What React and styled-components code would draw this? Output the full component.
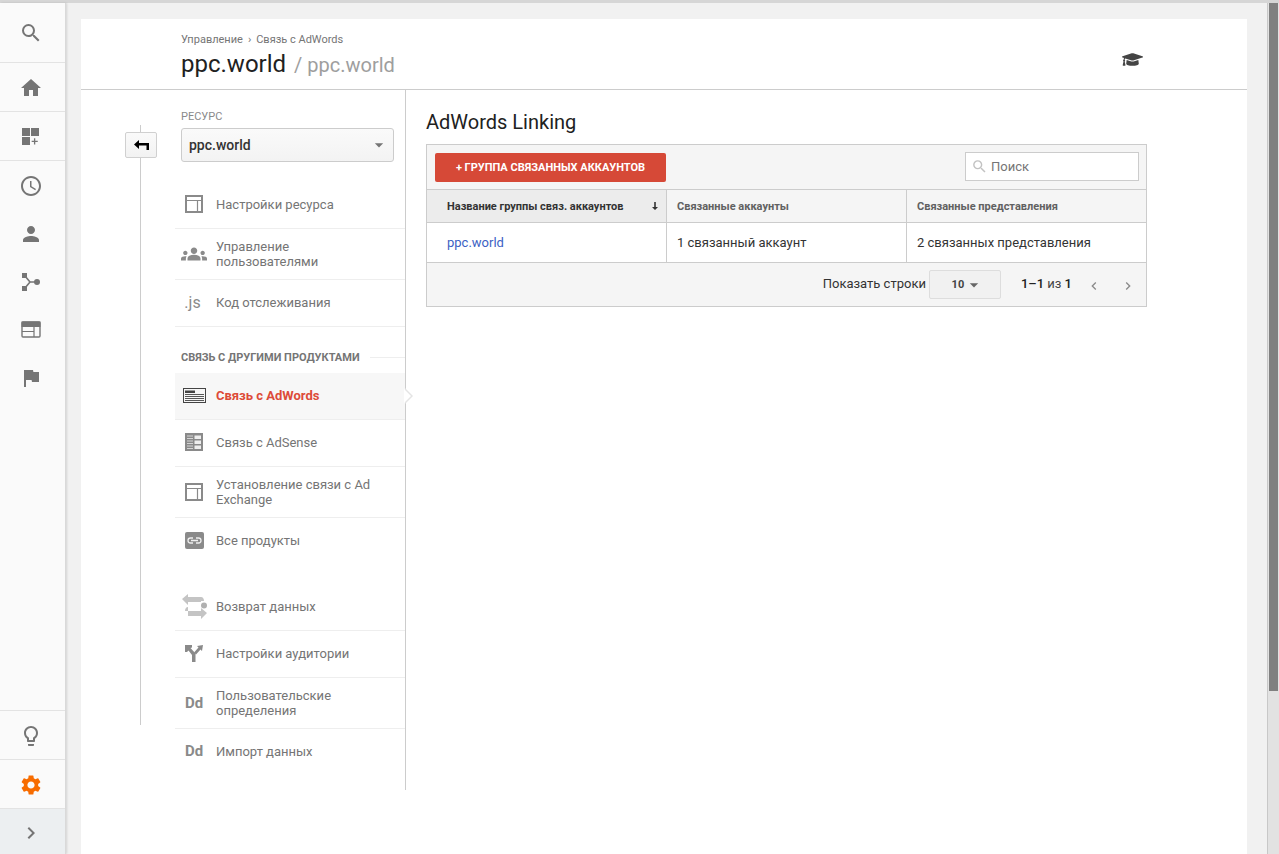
import React from 'react';
import styled, { createGlobalStyle } from 'styled-components';
import {
  MdSearch, MdHome, MdAccessTime, MdPerson, MdSettings, MdLightbulbOutline,
  MdChevronRight, MdChevronLeft, MdGroups, MdArrowDropDown, MdFlag,
} from 'react-icons/md';
import { FaGraduationCap } from 'react-icons/fa';

const GlobalStyle = createGlobalStyle`
  html, body { margin: 0; padding: 0; height: 100%; overflow: hidden; }
  body { font-family: Roboto, "Liberation Sans", sans-serif; background: #f1f1f1; }
  * { box-sizing: border-box; }
`;

// Small drawn icons ----------------------
const GridPlusIcon = () => (
  <svg width="20" height="20" viewBox="0 0 20 20" fill="#757575">
    <rect x="1" y="1" width="8" height="8" />
    <rect x="10" y="1" width="8" height="8" />
    <rect x="1" y="10" width="8" height="8" />
    <path d="M13 11.5h1.4V14H17v1.3h-2.6V18H13v-2.7h-2.4V14H13z" transform="translate(.6 .4) scale(.95)" />
  </svg>
);

const BranchIcon = () => (
  <svg width="20" height="20" viewBox="0 0 20 20" fill="#757575">
    <rect x="1" y="1" width="5" height="5" />
    <rect x="1" y="14" width="5" height="5" />
    <circle cx="16" cy="10" r="3" />
    <path d="M4 4l5 6-5 6M9 10h6" fill="none" stroke="#757575" strokeWidth="1.6" />
  </svg>
);

const WindowIcon = () => (
  <svg width="20" height="18" viewBox="0 0 20 18" fill="none" stroke="#757575">
    <rect x="1" y="1" width="18" height="15" rx="1" strokeWidth="1.4" />
    <rect x="1" y="1" width="18" height="4.5" fill="#757575" strokeWidth="1" />
    <path d="M1 10.5h12M13 5v11" strokeWidth="1.2" />
  </svg>
);

const PanelIcon = () => (
  <svg width="18" height="18" viewBox="0 0 18 18" fill="none" stroke="#8a8a8a">
    <rect x="1" y="1" width="16" height="16" strokeWidth="2" />
    <path d="M1 5.5h16M12.5 5.5V17" strokeWidth="1.2" />
  </svg>
);

const AdWordsIcon = () => (
  <svg width="23" height="15" viewBox="0 0 23 15" fill="none" stroke="#444">
    <rect x=".5" y=".5" width="22" height="14" strokeWidth="1" />
    <rect x="2" y="2.5" width="10" height="2.5" fill="#444" stroke="none" />
    <path d="M2 6.5h19M2 8.5h19M2 10.5h19M2 12.5h19" strokeWidth=".9" />
  </svg>
);

const AdSenseIcon = () => (
  <svg width="18" height="18" viewBox="0 0 18 18">
    <rect width="18" height="18" fill="#8a8a8a" />
    <path d="M2 3h6M2 5.5h6M2 8h6M2 10.5h6M2 13h6M2 15.5h6" stroke="#d5d5d5" strokeWidth="1" />
    <rect x="9.5" y="2.5" width="6.5" height="3.5" fill="#eee" />
    <rect x="9.5" y="7.5" width="6.5" height="3.5" fill="#eee" />
    <rect x="9.5" y="12.5" width="6.5" height="3.5" fill="#eee" />
  </svg>
);

const LinkIcon = () => (
  <svg width="19" height="17" viewBox="0 0 19 17">
    <rect width="19" height="17" rx="2" fill="#8a8a8a" />
    <path d="M8 6H5.5a2.5 2.5 0 0 0 0 5H8M11 6h2.500a2.500 2.500 0 0 1 0 5H11M6 8.500h7" fill="none" stroke="#eee" strokeWidth="1.300" />
  </svg>
);

const ReturnIcon = () => (
  <svg width="25" height="26" viewBox="0 0 25 26" fill="#c4c4c4">
    <path d="M0 6l6-5v3h13v5H6v3zM25 20l-6-5v3H6v5h13v3z" />
    <path d="M19 4c2 0 3 2 3 4h-3zM6 14c-2 0-3 2-3 4h3z" />
    <circle cx="22" cy="12.500" r="3" fill="#b0b0b0" />
  </svg>
);

const AudienceIcon = () => (
  <svg width="18" height="18" viewBox="0 0 18 18" fill="#8a8a8a">
    <path d="M0 1h7v2.500L5.500 4 10.500 9.500V18H7v-7L3.500 6.500 2 8H0z" />
    <path d="M18 1l-1 6-1.500-1.500-4.500 5-2-2 4.500-5L12 2z" />
  </svg>
);

const SortIcon = () => (
  <svg width="6" height="8" viewBox="0 0 6 8" fill="#333">
    <path d="M2.200 0h1.600v5H6L3 8 0 5h2.200z" />
  </svg>
);

const TableSearchIcon = styled(MdSearch)`
  color: #c2c2c2;
  flex: none;
`;

// Layout ----------------------
const Page = styled.div`
  display: flex;
  height: 854px;
  border-top: 3px solid #d6d6d6;
  background: #f1f1f1;
`;

const Sidebar = styled.nav`
  width: 66px;
  flex: none;
  display: flex;
  flex-direction: column;
  background: #fafafa;
  border-right: 1px solid #d9d9d9;
  box-shadow: 1px 0 2px rgba(0, 0, 0, .12);
`;

const SideGroup = styled.div`
  display: flex;
  flex-direction: column;
  margin-top: ${(p) => (p.$bottom ? 'auto' : '0')};
`;

const SideItem = styled.div`
  height: ${(p) => p.$h || 48}px;
  flex: none;
  display: flex;
  align-items: center;
  justify-content: center;
  padding: ${(p) => (p.$flat ? '0' : '2px')} 3px 0 0;
  color: ${(p) => p.$color || '#757575'};
  background: ${(p) => p.$bg || 'transparent'};
  border-top: ${(p) => (p.$top ? '1px solid #e3e3e3' : '0')};
  border-bottom: ${(p) => (p.$line ? '1px solid #e3e3e3' : '0')};
`;

const Main = styled.div`
  flex: 1;
  min-width: 0;
  padding: 16px 20px 0 15px;
`;

const Card = styled.div`
  background: #fff;
  height: 100%;
`;

const Header = styled.header`
  height: 71px;
  padding: 13px 104px 0 100px;
  display: flex;
  align-items: center;
  justify-content: space-between;
  border-bottom: 1px solid #ccc;
`;

const Breadcrumbs = styled.div`
  font-size: 11px;
  line-height: 14px;
  color: #757575;
  display: flex;
  gap: 5px;
  margin-top: -9px;
`;

const Titles = styled.div`
  display: flex;
  align-items: baseline;
  gap: 8px;
  margin-top: 2px;
  line-height: 30px;
`;

const Title = styled.span`
  font-size: 24px;
  color: #212121;
`;

const SubTitle = styled.span`
  font-size: 20px;
  color: #9e9e9e;
`;

const CapIcon = styled(FaGraduationCap)`
  margin-top: -2px;
  color: #444;
`;

const Columns = styled.div`
  display: flex;
  align-items: flex-start;
`;

const Rail = styled.div`
  width: 94px;
  padding: 35px 0 0 24px;
  flex: none;
  height: 635px;
  display: flex;
  flex-direction: column;
  align-items: flex-start;
`;

const RailLine = styled.div`
  width: 1px;
  margin-left: 15px;
  background: #ccc;
  height: ${(p) => (p.$long ? 'auto' : '7px')};
  flex: ${(p) => (p.$long ? '1' : 'none')};
`;

const RailGroup = styled.div`
  display: flex;
  flex-direction: column;
  align-items: flex-start;
  height: 100%;
  margin-left: 20px;
`;

const BackButton = styled.div`
  width: 32px;
  height: 26px;
  flex: none;
  display: flex;
  align-items: center;
  justify-content: center;
  background: linear-gradient(#fafafa, #f2f2f2);
  border: 1px solid #d0d0d0;
  border-radius: 2px;
`;

const NavColumn = styled.div`
  width: 231px;
  height: 700px;
  flex: none;
  border-right: 1px solid #ccc;
`;

const Property = styled.div`
  padding: 20px 11px 20px 6px;
`;

const FieldLabel = styled.div`
  font-size: 11px;
  line-height: 13px;
  color: #8a8a8a;
  margin-bottom: 5px;
`;

const PropertySelect = styled.div`
  height: 34px;
  display: flex;
  align-items: center;
  justify-content: space-between;
  padding: 0 4px 0 7px;
  font-size: 14px;
  font-weight: 500;
  color: #333;
  background: linear-gradient(#fafafa, #f3f3f3);
  border: 1px solid #ccc;
  border-radius: 3px;
`;

const NavItem = styled.div`
  height: ${(p) => p.$h || 47}px;
  padding-bottom: ${(p) => (p.$h ? 0 : 2)}px;
  display: flex;
  align-items: center;
  position: relative;
  font-size: 13px;
  line-height: 15px;
  font-weight: ${(p) => (p.$active ? 700 : 400)};
  color: ${(p) => (p.$active ? '#dd4b39' : '#757575')};
  background: ${(p) => (p.$active ? '#f7f7f7' : 'transparent')};
  border-bottom: ${(p) => (p.$plain ? '0' : '1px solid #eee')};
`;

const NavLabel = styled.span`
  max-width: 160px;
`;

const NavIcon = styled.span`
  width: 41px;
  flex: none;
  display: flex;
  align-items: center;
  justify-content: center;
  padding-right: 3px;
  color: #8a8a8a;
`;

const TextIcon = styled.span`
  font-size: ${(p) => p.$size || 14}px;
  font-weight: ${(p) => p.$weight || 700};
  margin-right: ${(p) => p.$shift || 0}px;
  color: #8a8a8a;
`;

const NavPointer = styled.span`
  position: absolute;
  right: -8px;
  top: 15px;
  width: 0;
  height: 0;
  border-top: 8px solid transparent;
  border-bottom: 8px solid transparent;
  border-left: 8px solid #e4e4e4;
  &::after {
    content: '';
    position: absolute;
    left: -9px;
    top: -7px;
    border-top: 7px solid transparent;
    border-bottom: 7px solid transparent;
    border-left: 7px solid #fff;
  }
`;

const SectionTitle = styled.div`
  display: flex;
  align-items: center;
  gap: 10px;
  height: 46px;
  padding: 14px 0 0 6px;
  font-size: 11px;
  font-weight: 700;
  color: #757575;
  white-space: nowrap;
  &::after {
    content: '';
    flex: 1;
    height: 1px;
    background: #eee;
  }
`;

const Gap = styled.div`
  height: 19px;
`;

const Content = styled.section`
  flex: 1;
  min-width: 0;
  padding: 20px 100px 0 20px;
`;

const PageTitle = styled.h1`
  margin: 0 0 10px;
  font-size: 20px;
  line-height: 24px;
  font-weight: 400;
  color: #212121;
`;

const TableBox = styled.div`
  border: 1px solid #ccc;
  background: #f5f5f5;
`;

const Toolbar = styled.div`
  height: 45px;
  padding: 8px 7px 0 8px;
  display: flex;
  justify-content: space-between;
  align-items: flex-start;
  border-bottom: 1px solid #ccc;
`;

const AddButton = styled.button`
  width: 231px;
  height: 29px;
  border: 0;
  border-radius: 2px;
  background: #d64937;
  color: #fff;
  font-family: inherit;
  font-size: 11px;
  font-weight: 700;
  padding: 0;
`;

const SearchBox = styled.div`
  width: 174px;
  height: 29px;
  margin-top: -1px;
  padding: 0 5px;
  display: flex;
  align-items: center;
  gap: 3px;
  background: #fff;
  border: 1px solid #ccc;
  font-size: 13px;
  color: #757575;
`;

const Row = styled.div`
  display: grid;
  grid-template-columns: 240px 240px 1fr;
  height: ${(p) => p.$h}px;
  background: ${(p) => (p.$head ? '#f5f5f5' : '#fff')};
  border-bottom: 1px solid #ccc;
`;

const Cell = styled.div`
  display: flex;
  align-items: center;
  justify-content: space-between;
  padding: 0 8px 0 ${(p) => (p.$first ? 20 : 10)}px;
  font-size: ${(p) => (p.$head ? 11 : 13)}px;
  font-weight: ${(p) => (p.$head ? 700 : 400)};
  color: ${(p) => (p.$sorted ? '#333' : p.$head ? '#616161' : '#333')};
  background: ${(p) => (p.$sorted ? '#ececec' : 'transparent')};
  border-right: ${(p) => (p.$last ? '0' : '1px solid #ccc')};
`;

const TableLink = styled.a`
  color: #3c5fc4;
  font-size: 13px;
  text-decoration: none;
`;

const Pager = styled.div`
  height: 43px;
  padding-bottom: 2px;
  display: flex;
  align-items: center;
  justify-content: flex-end;
  font-size: 13px;
  color: #333;
`;

const RowsSelect = styled.div`
  width: 72px;
  height: 29px;
  margin: 2px 20px 0 3px;
  display: flex;
  align-items: center;
  justify-content: center;
  font-size: 11px;
  font-weight: 700;
  color: #444;
  padding-left: 6px;
  background: #f1f1f1;
  border: 1px solid #ddd;
  border-radius: 2px;
`;

const PageCount = styled.span`
  b { font-weight: 500; color: #222; }
  color: #444;
  margin-right: 14px;
`;

const PagerIcons = styled.div`
  display: flex;
  gap: 18px;
  color: #8a8a8a;
  margin: 4px 10px 0 0;
`;

const Scrollbar = styled.div`
  width: 12px;
  flex: none;
  padding: 0 1px;
  background: #e2e2e2;
  border-left: 1px solid #c8c8c8;
`;

const ScrollThumb = styled.div`
  height: 688px;
  background: #808080;
`;

const navTop = [
  { icon: <PanelIcon />, label: 'Настройки ресурса' },
  { icon: <MdGroups size={26} />, label: 'Управление пользователями', h: 51 },
  { icon: <TextIcon $size={16} $weight={400} $shift={3}>.js</TextIcon>, label: 'Код отслеживания' },
];

const navLinks = [
  { icon: <AdWordsIcon />, label: 'Связь с AdWords', active: true },
  { icon: <AdSenseIcon />, label: 'Связь с AdSense' },
  { icon: <PanelIcon />, label: 'Установление связи с Ad Exchange', h: 51 },
  { icon: <LinkIcon />, label: 'Все продукты', plain: true },
];

const navData = [
  { icon: <ReturnIcon />, label: 'Возврат данных' },
  { icon: <AudienceIcon />, label: 'Настройки аудитории' },
  { icon: <TextIcon $size={15}>Dd</TextIcon>, label: 'Пользовательские определения', h: 51 },
  { icon: <TextIcon $size={15}>Dd</TextIcon>, label: 'Импорт данных', plain: true },
];

const renderNav = (items) => items.map((item) => (
  <NavItem key={item.label} $h={item.h} $active={item.active} $plain={item.plain}>
    <NavIcon>{item.icon}</NavIcon>
    <NavLabel>{item.label}</NavLabel>
    {item.active && <NavPointer />}
  </NavItem>
));

export default function App() {
  return (
    <>
      <GlobalStyle />
      <Page>
        <Sidebar>
          <SideGroup>
            <SideItem $h={60} $line $flat><MdSearch size={24} /></SideItem>
            <SideItem $h={49} $line><MdHome size={24} /></SideItem>
            <SideItem $h={49} $line><GridPlusIcon /></SideItem>
            <SideItem><MdAccessTime size={24} /></SideItem>
            <SideItem><MdPerson size={24} /></SideItem>
            <SideItem><BranchIcon /></SideItem>
            <SideItem><WindowIcon /></SideItem>
            <SideItem><MdFlag size={24} /></SideItem>
          </SideGroup>
          <SideGroup $bottom>
            <SideItem $h={49} $top><MdLightbulbOutline size={24} /></SideItem>
            <SideItem $h={49} $top $color="#f76c00"><MdSettings size={24} /></SideItem>
            <SideItem $h={46} $top $bg="#eceff1"><MdChevronRight size={24} /></SideItem>
          </SideGroup>
        </Sidebar>
        <Main>
          <Card>
            <Header>
              <div>
                <Breadcrumbs>
                  <span>Управление</span>
                  <span>›</span>
                  <span>Связь с AdWords</span>
                </Breadcrumbs>
                <Titles>
                  <Title>ppc.world</Title>
                  <SubTitle>/ ppc.world</SubTitle>
                </Titles>
              </div>
              <CapIcon size={21} />
            </Header>
            <Columns>
              <Rail>
                <RailGroup>
                  <RailLine />
                  <BackButton>
                    <svg width="15" height="10" viewBox="0 0 15 10">
                      <path d="M0 4.500L5 0v3h10v7h-2.500V5.500H5V9z" fill="#000" />
                    </svg>
                  </BackButton>
                  <RailLine $long />
                </RailGroup>
              </Rail>
              <NavColumn>
                <Property>
                  <FieldLabel>РЕСУРС</FieldLabel>
                  <PropertySelect>
                    ppc.world
                    <MdArrowDropDown size={20} color="#757575" />
                  </PropertySelect>
                </Property>
                {renderNav(navTop)}
                <SectionTitle>СВЯЗЬ С ДРУГИМИ ПРОДУКТАМИ</SectionTitle>
                {renderNav(navLinks)}
                <Gap />
                {renderNav(navData)}
              </NavColumn>
              <Content>
                <PageTitle>AdWords Linking</PageTitle>
                <TableBox>
                  <Toolbar>
                    <AddButton>+ ГРУППА СВЯЗАННЫХ АККАУНТОВ</AddButton>
                    <SearchBox>
                      <TableSearchIcon size={17} />
                      Поиск
                    </SearchBox>
                  </Toolbar>
                  <Row $head $h={33}>
                    <Cell $head $first $sorted>
                      Название группы связ. аккаунтов
                      <SortIcon />
                    </Cell>
                    <Cell $head>Связанные аккаунты</Cell>
                    <Cell $head $last>Связанные представления</Cell>
                  </Row>
                  <Row $h={40}>
                    <Cell $first><TableLink href="#">ppc.world</TableLink></Cell>
                    <Cell>1 связанный аккаунт</Cell>
                    <Cell $last>2 связанных представления</Cell>
                  </Row>
                  <Pager>
                    Показать строки
                    <RowsSelect>
                      10
                      <MdArrowDropDown size={20} color="#666" />
                    </RowsSelect>
                    <PageCount><b>1–1</b> из <b>1</b></PageCount>
                    <PagerIcons>
                      <MdChevronLeft size={16} />
                      <MdChevronRight size={16} />
                    </PagerIcons>
                  </Pager>
                </TableBox>
              </Content>
            </Columns>
          </Card>
        </Main>
        <Scrollbar>
          <ScrollThumb />
        </Scrollbar>
      </Page>
    </>
  );
}
